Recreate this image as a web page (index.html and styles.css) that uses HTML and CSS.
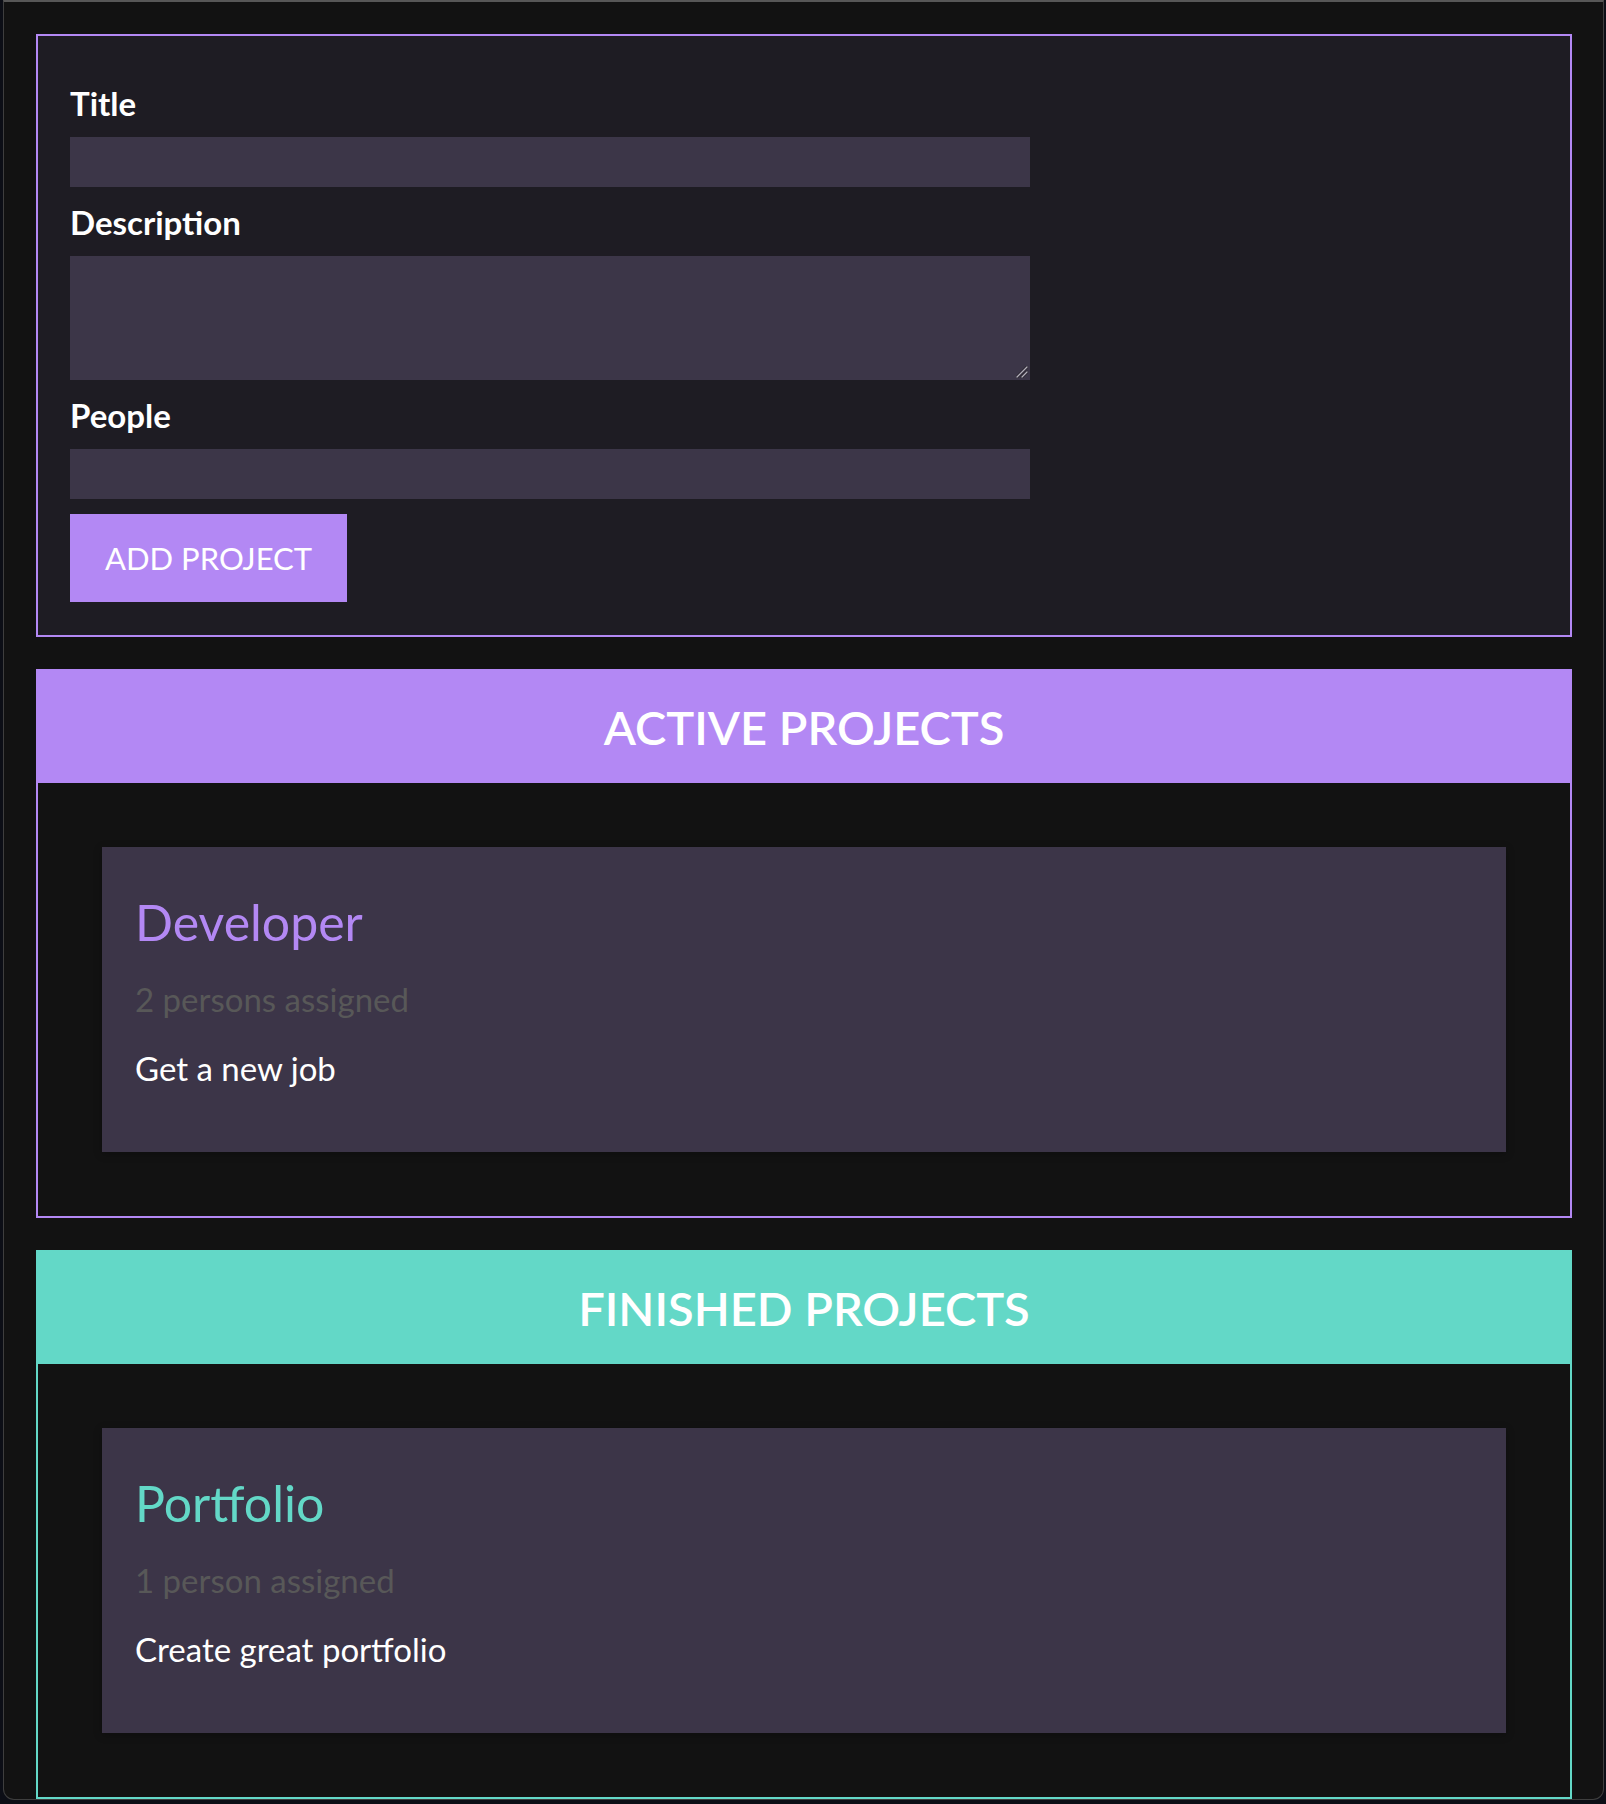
FILE: index.html
```html
<!DOCTYPE html>
<html lang="en">
<head>
<meta charset="utf-8">
<title>Project Manager</title>
<link rel="stylesheet" href="styles.css">
</head>
<body>
<div class="window">
  <form class="project-form">
    <div class="form-control">
      <label for="title">Title</label>
      <input type="text" id="title" class="field">
    </div>
    <div class="form-control">
      <label for="description">Description</label>
      <div class="area-wrap">
        <textarea id="description" class="field field-area"></textarea>
        <svg class="grip" width="12" height="12" viewBox="0 0 12 12" aria-hidden="true">
          <path d="M11 1 L1 11" stroke="#2a2630" stroke-width="3" stroke-linecap="round"/>
          <path d="M11 6 L6 11" stroke="#2a2630" stroke-width="3" stroke-linecap="round"/>
          <path d="M11 1 L1 11" stroke="#b4b0bb" stroke-width="1.3" stroke-linecap="round"/>
          <path d="M11 6 L6 11" stroke="#b4b0bb" stroke-width="1.3" stroke-linecap="round"/>
        </svg>
      </div>
    </div>
    <div class="form-control">
      <label for="people">People</label>
      <input type="number" id="people" class="field">
    </div>
    <button type="button" class="btn">ADD PROJECT</button>
  </form>

  <section class="projects projects-active">
    <header class="projects-header"><h2>ACTIVE PROJECTS</h2></header>
    <ul class="project-list">
      <li class="project-card">
        <h2 class="card-title">Developer</h2>
        <h3 class="card-people">2 persons assigned</h3>
        <p class="card-desc">Get a new job</p>
      </li>
    </ul>
  </section>

  <section class="projects projects-finished">
    <header class="projects-header"><h2>FINISHED PROJECTS</h2></header>
    <ul class="project-list">
      <li class="project-card">
        <h2 class="card-title">Portfolio</h2>
        <h3 class="card-people">1 person assigned</h3>
        <p class="card-desc">Create great portfolio</p>
      </li>
    </ul>
  </section>
</div>
</body>
</html>
```

FILE: styles.css
```css
* {
  box-sizing: border-box;
}

html, body {
  margin: 0;
  padding: 0;
}

body {
  background: #0c0e16;
  font-family: "Lato", "Open Sans", sans-serif;
  color: #ffffff;
  width: 1606px;
  height: 1804px;
  overflow: hidden;
}

.window {
  margin-left: 3px;
  width: 1601px;
  height: 1800px;
  background: #121212;
  border-top: 2px solid #575757;
  border-left: 1px solid #3e3e3e;
  border-right: 1px solid #3e3e3e;
  border-bottom: 1px solid #3e3e3e;
  border-radius: 0 0 11px 11px;
  padding: 0 31px 0 32px;
  overflow: hidden;
}

/* ---------- form ---------- */
.project-form {
  margin-top: 32px;
  background: #1e1c23;
  border: 2px solid #b388f4;
  padding: 47px 32px 33px;
}

.form-control {
  margin-bottom: 15px;
}

.form-control label {
  display: block;
  font-size: 33px;
  font-weight: 700;
  line-height: 40px;
  margin-bottom: 14px;
  color: #ffffff;
}

.field {
  display: block;
  width: 960px;
  height: 50px;
  margin: 0;
  border: none;
  outline: none;
  background: #3c3648;
  color: #ffffff;
  font: inherit;
  font-size: 30px;
  padding: 0 10px;
}

.area-wrap {
  position: relative;
  width: 960px;
  height: 124px;
}

.field-area {
  height: 124px;
  resize: none;
}

.grip {
  position: absolute;
  right: 2px;
  bottom: 2px;
}

.btn {
  display: block;
  height: 88px;
  padding: 0 35px;
  border: none;
  background: #b388f4;
  color: #ffffff;
  font-family: "Lato", "Open Sans", sans-serif;
  font-size: 31px;
  font-weight: 400;
  line-height: 88px;
  cursor: pointer;
}

/* ---------- project sections ---------- */
.projects {
  margin-top: 32px;
  border: 2px solid #b388f4;
}

.projects-active {
  border-color: #b388f4;
}

.projects-finished {
  border-color: #63d8c7;
}

.projects-header {
  height: 112px;
  display: flex;
  align-items: center;
  justify-content: center;
}

.projects-active .projects-header {
  background: #b388f4;
}

.projects-finished .projects-header {
  background: #63d8c7;
}

.projects-header h2 {
  margin: 0;
  font-size: 47px;
  font-weight: 600;
  line-height: 60px;
  color: #ffffff;
}

.project-list {
  list-style: none;
  margin: 0;
  padding: 64px;
}

.project-card {
  background: #3c3548;
  padding: 33px;
  height: 305px;
  box-shadow: 0 2px 8px rgba(0, 0, 0, 0.26);
}

.card-title {
  margin: 12px 0 0;
  font-size: 50px;
  font-weight: 400;
  line-height: 60px;
}

.projects-active .card-title {
  color: #b388f4;
}

.projects-finished .card-title {
  color: #63d8c7;
}

.card-people {
  margin: 27px 0 0;
  font-size: 33px;
  font-weight: 400;
  line-height: 40px;
  color: #585858;
}

.card-desc {
  margin: 29px 0 0;
  font-size: 33px;
  line-height: 40px;
  color: #ffffff;
}
```
